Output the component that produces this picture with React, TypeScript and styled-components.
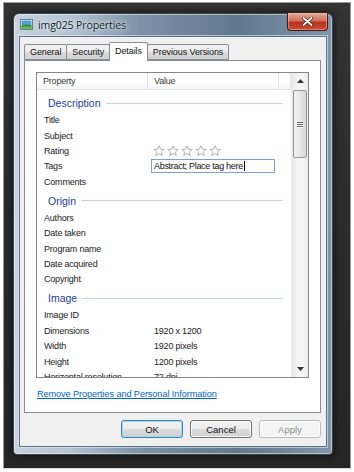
import styled, { createGlobalStyle } from 'styled-components';

const GlobalStyle = createGlobalStyle`
  html, body {
    margin: 0;
    padding: 0;
    background: #ffffff;
  }
  body {
    font-family: "Liberation Sans", Arial, sans-serif;
    font-size: 9px;
    color: #1a1a1a;
  }
`;

const Desk = styled.div`
  box-sizing: border-box;
  margin: 2px 3px 0 3px;
  width: 348px;
  height: 467px;
  padding: 10px 18px 0 9px;
  background: linear-gradient(180deg, #343434 0%, #2a2a2a 60%, #262626 100%);
  border: 1px solid #9a9a9a;
  border-bottom-color: #d8d8d8;
`;

const Win = styled.div`
  position: relative;
  box-sizing: border-box;
  width: 320px;
  height: 442px;
  display: flex;
  flex-direction: column;
  border-radius: 6px 6px 4px 4px;
  border: 1px solid #3a4653;
  background: linear-gradient(90deg, #c7d3de 0%, #b3c2d0 18%, #7d91a5 40%, #62788d 70%, #7f95aa 100%);
  box-shadow: 0 0 8px rgba(0, 0, 0, 0.7), inset 0 0 0 1px rgba(255, 255, 255, 0.45);
`;

const TitleBar = styled.div`
  height: 22px;
  display: flex;
  align-items: center;
  padding: 0 0 1px 6px;
  box-sizing: border-box;
  gap: 5px;
`;

const Title = styled.span`
  font-family: "Open Sans", "Liberation Sans", sans-serif;
  font-size: 10.5px;
  color: #0e1a24;
  text-shadow: 0 0 6px rgba(255, 255, 255, 0.9), 0 0 2px rgba(255, 255, 255, 0.9);
  letter-spacing: -0.1px;
`;

const CloseBtn = styled.div`
  position: absolute;
  top: -1px;
  right: 4px;
  width: 41px;
  height: 18px;
  box-sizing: border-box;
  border: 1px solid #3d1a16;
  border-top: none;
  border-radius: 0 0 4px 4px;
  background: linear-gradient(180deg, #e5a899 0%, #d0705c 45%, #b8321d 55%, #c94c33 100%);
  display: flex;
  align-items: center;
  justify-content: center;
  box-shadow: inset 0 0 0 1px rgba(255, 200, 190, 0.5);
`;

const Client = styled.div`
  flex: 1;
  margin: 0 5px 7px 5px;
  box-sizing: border-box;
  background: #f0f0f0;
  border: 1px solid #5d7288;
  box-shadow: 0 0 0 1px rgba(230, 238, 245, 0.6);
  display: flex;
  flex-direction: column;
  padding: 6px 5px 8px 4px;
`;

const TabRow = styled.div`
  display: flex;
  align-items: flex-end;
  height: 17px;
  position: relative;
  z-index: 1;
`;

const Tab = styled.div<{ $active?: boolean }>`
  box-sizing: border-box;
  height: ${(p) => (p.$active ? '19px' : '16px')};
  margin-bottom: ${(p) => (p.$active ? '-1px' : '0')};
  padding: 0 5px;
  display: flex;
  align-items: center;
  border: 1px solid #898c95;
  border-bottom: ${(p) => (p.$active ? 'none' : '1px solid #898c95')};
  border-radius: 2px 2px 0 0;
  margin-right: -1px;
  background: ${(p) =>
    p.$active ? '#ffffff' : 'linear-gradient(180deg, #f2f2f2 0%, #ebebeb 50%, #dddddd 51%, #cfcfcf 100%)'};
  color: #111;
  font-size: 9px;
  letter-spacing: -0.1px;
  position: relative;
  z-index: ${(p) => (p.$active ? 2 : 1)};
  padding-bottom: ${(p) => (p.$active ? '2px' : '0')};
`;

const Panel = styled.div`
  flex: 1;
  box-sizing: border-box;
  background: #ffffff;
  border: 1px solid #898c95;
  display: flex;
  flex-direction: column;
  padding: 11px 11px 0 11px;
`;

const ListView = styled.div`
  box-sizing: border-box;
  height: 306px;
  border: 1px solid #828790;
  display: flex;
  overflow: hidden;
`;

const ListMain = styled.div`
  flex: 1;
  display: flex;
  flex-direction: column;
  overflow: hidden;
`;

const Header = styled.div`
  height: 16px;
  flex-shrink: 0;
  display: flex;
  background: linear-gradient(180deg, #ffffff 0%, #ffffff 60%, #f3f4f6 100%);
  border-bottom: 1px solid #e3e6ea;
`;

const HeaderCell = styled.div<{ $w?: number }>`
  box-sizing: border-box;
  width: ${(p) => (p.$w ? `${p.$w}px` : 'auto')};
  flex: ${(p) => (p.$w ? 'none' : '1')};
  padding-left: 6px;
  display: flex;
  align-items: center;
  border-right: 1px solid #e3e5e8;
  color: #3a3a3a;
  letter-spacing: -0.2px;
`;

const Body = styled.div`
  padding-top: 2px;
  display: flex;
  flex-direction: column;
`;

const GroupRow = styled.div`
  height: 20.6px;
  display: flex;
  align-items: center;
  padding: 0 8px 0 11px;
  gap: 5px;
  box-sizing: border-box;
  padding-top: 2px;
`;

const GroupName = styled.span`
  color: #1e3c9a;
  font-size: 10.5px;
`;

const GroupLine = styled.div`
  flex: 1;
  height: 1px;
  background: #c4d3ec;
`;

const Row = styled.div`
  height: 15.4px;
  display: flex;
  align-items: center;
`;

const Label = styled.div`
  width: 111px;
  padding-left: 7px;
  box-sizing: border-box;
  color: #222;
  white-space: nowrap;
  letter-spacing: -0.2px;
`;

const Value = styled.div`
  flex: 1;
  padding-left: 6px;
  display: flex;
  align-items: center;
  color: #222;
  white-space: nowrap;
  letter-spacing: -0.2px;
`;

const Stars = styled.div`
  display: flex;
  gap: 2px;
  margin-left: -1px;
`;

const TagInput = styled.div`
  box-sizing: border-box;
  width: 124px;
  height: 14px;
  margin-left: -3px;
  border: 1px solid #7da2ce;
  padding-left: 2px;
  display: flex;
  align-items: center;
  color: #111;
  font-size: 9px;
  letter-spacing: -0.3px;
`;

const Caret = styled.span`
  display: inline-block;
  width: 1px;
  height: 10px;
  background: #000;
  margin-left: 1px;
`;

const ScrollBar = styled.div`
  width: 16px;
  flex-shrink: 0;
  display: flex;
  flex-direction: column;
  background: linear-gradient(90deg, #e6e6e6 0%, #f5f5f5 30%, #f5f5f5 70%, #e8e8e8 100%);
  border-left: 1px solid #f0f0f0;
`;

const Arrow = styled.div`
  height: 16px;
  display: flex;
  align-items: center;
  justify-content: center;
`;

const Thumb = styled.div`
  box-sizing: border-box;
  margin: 1px 1px 0 1px;
  height: 68px;
  border: 1px solid #979797;
  border-radius: 2px;
  background: linear-gradient(90deg, #f3f3f3 0%, #e8e8e8 50%, #d6d6d6 100%);
  display: flex;
  flex-direction: column;
  align-items: center;
  justify-content: center;
  gap: 1px;
`;

const Grip = styled.div`
  width: 6px;
  height: 1px;
  background: #666;
  box-shadow: 0 1px 0 #fff;
`;

const Track = styled.div`
  flex: 1;
`;

const LinkArea = styled.div`
  flex: 1;
  display: flex;
  align-items: center;
  padding-left: 1px;
  padding-bottom: 2px;
`;

const Link = styled.span`
  color: #0066cc;
  text-decoration: underline;
  font-size: 9.2px;
  letter-spacing: -0.1px;
`;

const Buttons = styled.div`
  display: flex;
  justify-content: flex-end;
  gap: 7px;
  padding-top: 7px;
  height: 18px;
  box-sizing: content-box;
`;

const Btn = styled.div<{ $focus?: boolean; $disabled?: boolean }>`
  box-sizing: border-box;
  width: 62px;
  height: 18px;
  border-radius: 3px;
  display: flex;
  align-items: center;
  justify-content: center;
  font-size: 9.5px;
  border: 1px solid ${(p) => (p.$focus ? '#3c7fb1' : p.$disabled ? '#b6bbbf' : '#707070')};
  background: ${(p) =>
    p.$disabled
      ? '#f4f4f4'
      : 'linear-gradient(180deg, #f2f2f2 0%, #ebebeb 50%, #dddddd 51%, #cfcfcf 100%)'};
  box-shadow: ${(p) => (p.$focus ? 'inset 0 0 0 1px #a8d8f2' : 'inset 0 0 0 1px #fcfcfc')};
  color: ${(p) => (p.$disabled ? '#8d8d8d' : '#111')};
`;

function Star() {
  return (
    <svg width="12" height="12" viewBox="0 0 12 12">
      <path
        d="M6 0.8 L7.5 4.2 L11.2 4.5 L8.4 6.9 L9.3 10.6 L6 8.6 L2.7 10.6 L3.6 6.9 L0.8 4.5 L4.5 4.2 Z"
        fill="#fdfdfd"
        stroke="#a9a9a9"
        strokeWidth="0.9"
        strokeLinejoin="round"
      />
    </svg>
  );
}

function ImageIcon() {
  return (
    <svg width="13" height="11" viewBox="0 0 13 11">
      <rect x="0.5" y="0.5" width="12" height="10" fill="#fff" stroke="#6d7c8c" />
      <rect x="1.5" y="1.5" width="10" height="8" fill="#4aa0d8" />
      <path d="M1.5 7 Q5 4.5 11.5 6.5 L11.5 9.5 L1.5 9.5 Z" fill="#3f8f3a" />
      <path d="M1.5 8.5 Q6 6.5 11.5 8.5 L11.5 9.5 L1.5 9.5 Z" fill="#76b94a" />
    </svg>
  );
}

type Item = { label: string; value?: string; kind?: 'stars' | 'tags' };

const groups: { name: string; items: Item[] }[] = [
  {
    name: 'Description',
    items: [
      { label: 'Title' },
      { label: 'Subject' },
      { label: 'Rating', kind: 'stars' },
      { label: 'Tags', kind: 'tags' },
      { label: 'Comments' },
    ],
  },
  {
    name: 'Origin',
    items: [
      { label: 'Authors' },
      { label: 'Date taken' },
      { label: 'Program name' },
      { label: 'Date acquired' },
      { label: 'Copyright' },
    ],
  },
  {
    name: 'Image',
    items: [
      { label: 'Image ID' },
      { label: 'Dimensions', value: '1920 x 1200' },
      { label: 'Width', value: '1920 pixels' },
      { label: 'Height', value: '1200 pixels' },
      { label: 'Horizontal resolution', value: '72 dpi' },
    ],
  },
];

function renderValue(item: Item) {
  if (item.kind === 'stars') {
    return (
      <Stars>
        {[0, 1, 2, 3, 4].map((i) => (
          <Star key={i} />
        ))}
      </Stars>
    );
  }
  if (item.kind === 'tags') {
    return (
      <TagInput>
        Abstract; Place tag here
        <Caret />
      </TagInput>
    );
  }
  return item.value;
}

export default function App() {
  return (
    <>
      <GlobalStyle />
      <Desk>
        <Win>
          <TitleBar>
            <ImageIcon />
            <Title>img025 Properties</Title>
          </TitleBar>
          <CloseBtn>
            <svg width="11" height="9" viewBox="0 0 11 9">
              <path
                d="M1.5 1 L9.5 8 M9.5 1 L1.5 8"
                stroke="#3a1008"
                strokeWidth="3"
                strokeLinecap="round"
              />
              <path d="M1.5 1 L9.5 8 M9.5 1 L1.5 8" stroke="#ffffff" strokeWidth="1.8" strokeLinecap="round" />
            </svg>
          </CloseBtn>
          <Client>
            <TabRow>
              <Tab>General</Tab>
              <Tab>Security</Tab>
              <Tab $active>Details</Tab>
              <Tab>Previous Versions</Tab>
            </TabRow>
            <Panel>
              <ListView>
                <ListMain>
                  <Header>
                    <HeaderCell $w={111}>Property</HeaderCell>
                    <HeaderCell $w={131}>Value</HeaderCell>
                    <HeaderCell />
                  </Header>
                  <Body>
                    {groups.map((g) => (
                      <div key={g.name}>
                        <GroupRow>
                          <GroupName>{g.name}</GroupName>
                          <GroupLine />
                        </GroupRow>
                        {g.items.map((it) => (
                          <Row key={it.label}>
                            <Label>{it.label}</Label>
                            <Value>{renderValue(it)}</Value>
                          </Row>
                        ))}
                      </div>
                    ))}
                  </Body>
                </ListMain>
                <ScrollBar>
                  <Arrow>
                    <svg width="7" height="4" viewBox="0 0 7 4">
                      <path d="M0 4 L3.5 0 L7 4 Z" fill="#333" />
                    </svg>
                  </Arrow>
                  <Thumb>
                    <Grip />
                    <Grip />
                    <Grip />
                  </Thumb>
                  <Track />
                  <Arrow>
                    <svg width="7" height="4" viewBox="0 0 7 4">
                      <path d="M0 0 L7 0 L3.5 4 Z" fill="#333" />
                    </svg>
                  </Arrow>
                </ScrollBar>
              </ListView>
              <LinkArea>
                <Link>Remove Properties and Personal Information</Link>
              </LinkArea>
            </Panel>
            <Buttons>
              <Btn $focus>OK</Btn>
              <Btn>Cancel</Btn>
              <Btn $disabled>Apply</Btn>
            </Buttons>
          </Client>
        </Win>
      </Desk>
    </>
  );
}
